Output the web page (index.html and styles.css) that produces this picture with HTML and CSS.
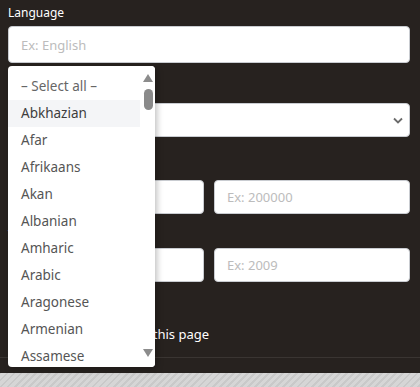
FILE: index.html
```html
<!DOCTYPE html>
<html lang="en">

<head>
  <meta charset="UTF-8">
  <meta name="viewport" content="width=device-width, initial-scale=1.0">
  <title>Search</title>
  <link rel="stylesheet" href="styles.css">
</head>

<body>
  <!-- search panel -->
  <div class="panel">
    <div class="field field-lang">
      <label>Language</label>
      <input type="text" class="input-tall" placeholder="Ex: English">
    </div>

    <div class="field field-genre">
      <label>Genre</label>
      <div class="select-box">
        <span></span>
        <svg class="chevron" width="10" height="7" viewBox="0 0 10 7">
          <path d="M1 1.5 L5 5.5 L9 1.5" fill="none" stroke="#6b6b6b" stroke-width="1.8" />
        </svg>
      </div>
    </div>

    <div class="row row-one">
      <div class="field">
        <label>Size</label>
        <input type="text" placeholder="Ex: 1000">
      </div>
      <div class="field">
        <label class="spacer"></label>
        <input type="text" placeholder="Ex: 200000">
      </div>
    </div>

    <div class="row row-two">
      <div class="field">
        <label>Year</label>
        <input type="text" placeholder="Ex: 1990">
      </div>
      <div class="field">
        <label class="spacer"></label>
        <input type="text" placeholder="Ex: 2009">
      </div>
    </div>

    <div class="check-row">
      <span>Search only on this page</span>
    </div>

    <div class="panel-footer"></div>

    <!-- language dropdown -->
    <div class="dropdown">
      <ul class="options">
        <li class="select-all">– Select all –</li>
        <li class="hover">Abkhazian</li>
        <li>Afar</li>
        <li>Afrikaans</li>
        <li>Akan</li>
        <li>Albanian</li>
        <li>Amharic</li>
        <li>Arabic</li>
        <li>Aragonese</li>
        <li>Armenian</li>
        <li>Assamese</li>
      </ul>
      <div class="scrollbar">
        <span class="arrow-up"></span>
        <span class="thumb"></span>
        <span class="arrow-down"></span>
      </div>
    </div>
  </div>
</body>

</html>
```

FILE: styles.css
```css
/* page */
body {
  margin: 0;
  padding: 0;
  height: 387px;
  overflow: hidden;
  font-family: "Noto Sans", Arial, sans-serif;
  background: repeating-linear-gradient(135deg, #d6d6d6 0, #d6d6d6 3px, #c9c9c9 3px, #c9c9c9 5px);
}

/* dark panel */
.panel {
  position: relative;
  background-color: #27221f;
  padding: 4px 10px 0 8px;
  height: 369px;
}

.field label {
  display: block;
  color: #ffffff;
  font-size: 12px;
  line-height: 18px;
  margin-bottom: 4px;
}

.field label.spacer {
  height: 18px;
}

.field input,
.select-box {
  display: block;
  box-sizing: border-box;
  width: 100%;
  height: 34px;
  margin: 0;
  padding: 0 12px;
  border: 1px solid #c9ccd1;
  border-radius: 4px;
  background-color: #ffffff;
  font-family: inherit;
  font-size: 13px;
  outline: none;
}

.field input::placeholder {
  color: #bcbcbc;
}

.field input.input-tall {
  height: 37px;
}

.field-lang {
  margin-bottom: 18px;
}

.field-genre {
  margin-bottom: 21px;
}

.select-box {
  display: flex;
  align-items: center;
  justify-content: space-between;
  padding-right: 6px;
}

.row {
  display: flex;
  gap: 10px;
}

.row .field {
  flex: 1;
}

.row-one {
  margin-bottom: 12px;
}

.check-row {
  margin-top: 42px;
  width: 201px;
  text-align: right;
  color: #ffffff;
  font-size: 13px;
  line-height: 20px;
  white-space: nowrap;
}

.panel-footer {
  margin-top: 13px;
  margin-left: -8px;
  margin-right: -10px;
  border-top: 1px solid #3a3532;
}

/* dropdown overlay */
.dropdown {
  position: absolute;
  top: 66px;
  left: 8px;
  width: 147px;
  height: 301px;
  background-color: #ffffff;
  border-radius: 4px;
  box-shadow: 2px 2px 6px rgba(0, 0, 0, 0.25);
  overflow: hidden;
  display: flex;
}

.options {
  list-style: none;
  margin: 0;
  padding: 7px 0 0 0;
  width: 132px;
}

.options li {
  height: 27px;
  line-height: 27px;
  padding-left: 13px;
  font-size: 13.5px;
  color: #555555;
  white-space: nowrap;
}

.options li.select-all {
  color: #666666;
}

.options li.hover {
  background-color: #f4f5f7;
  color: #3d3d3d;
}

.scrollbar {
  position: relative;
  width: 15px;
  background-color: #ffffff;
}

.arrow-up,
.arrow-down {
  position: absolute;
  left: 3px;
  width: 0;
  height: 0;
  border-left: 5px solid transparent;
  border-right: 5px solid transparent;
}

.arrow-up {
  top: 8px;
  border-bottom: 8px solid #8c8c8c;
}

.arrow-down {
  bottom: 10px;
  border-top: 8px solid #8c8c8c;
}

.thumb {
  position: absolute;
  top: 23px;
  left: 4px;
  width: 9px;
  height: 21px;
  border-radius: 5px;
  background-color: #8a8a8a;
}
```
